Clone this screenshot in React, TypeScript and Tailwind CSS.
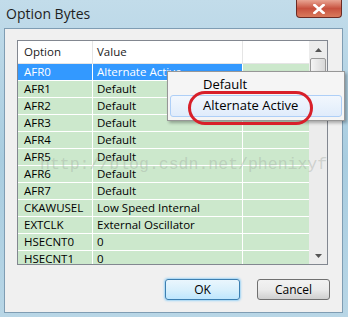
const rows: [string, string][] = [
  ["AFR0", "Alternate Active"],
  ["AFR1", "Default"],
  ["AFR2", "Default"],
  ["AFR3", "Default"],
  ["AFR4", "Default"],
  ["AFR5", "Default"],
  ["AFR6", "Default"],
  ["AFR7", "Default"],
  ["CKAWUSEL", "Low Speed Internal"],
  ["EXTCLK", "External Oscillator"],
  ["HSECNT0", "0"],
  ["HSECNT1", "0"],
];

const font = { fontFamily: '"Open Sans", "Noto Sans", sans-serif' };

function Scrollbar() {
  return (
    <div className="flex w-[18px] flex-col bg-[#ececec]">
      <div className="flex h-[17px] items-center justify-center">
        <svg width="7" height="4" viewBox="0 0 7 4">
          <path d="M0 4 L3.5 0 L7 4 Z" fill="#555" />
        </svg>
      </div>
      <div className="mx-[1px] h-[19px] rounded-[2px] border border-[#9a9a9a] bg-gradient-to-r from-[#f4f4f4] to-[#d8d8d8]" />
      <div className="flex-1" />
      <div className="flex h-[17px] items-center justify-center">
        <svg width="7" height="4" viewBox="0 0 7 4">
          <path d="M0 0 L3.5 4 L7 0 Z" fill="#555" />
        </svg>
      </div>
    </div>
  );
}

export default function App() {
  return (
    <div
      className="relative flex h-[317px] w-[348px] flex-col overflow-hidden bg-gradient-to-b from-[#c2dcea] via-[#a9cde0] to-[#b8d6e6] text-[#000]"
      style={font}
    >
      {/* title bar */}
      <div className="flex h-[28px] shrink-0 items-start">
        <span className="ml-[6px] mt-[5px] text-[14px] leading-[18px] text-[#1e1e1e]">Option Bytes</span>
        <div className="ml-auto mr-[6px] flex h-[18px] w-[46px] items-center justify-center rounded-b-[4px] border border-t-0 border-[#6b2b24] bg-gradient-to-b from-[#e8a493] via-[#c7513f] to-[#d97a5c]">
          <svg width="12" height="10" viewBox="0 0 12 10">
            <path d="M1.5 1 L10.5 9 M10.5 1 L1.5 9" stroke="#fff" strokeWidth="2.6" strokeLinecap="square" />
          </svg>
        </div>
      </div>

      {/* client area */}
      <div className="ml-[4px] flex h-[285px] w-[339px] flex-col border border-[#7f9db3] bg-[#f0f0f0]">
        {/* list */}
        <div className="ml-[12px] mt-[11px] flex h-[225px] w-[311px] overflow-hidden border border-[#828790] bg-white">
          <div className="flex flex-1 flex-col text-[11.5px]">
            <div className="flex h-[23px] shrink-0 items-center border-b border-[#e5e5e5] bg-white text-[#1a1a1a]">
              <div className="flex h-full w-[75px] items-center border-r border-[#e5e5e5] pl-[6px]">Option</div>
              <div className="flex h-full w-[150px] items-center border-r border-[#e5e5e5] pl-[4px]">Value</div>
              <div className="h-full flex-1" />
            </div>
            {rows.map(([opt, val], i) => {
              const sel = i === 0;
              return (
                <div key={opt} className="flex h-[17px] shrink-0 border-b border-white bg-[#cce8cc] leading-[16px]">
                  <div className={"w-[75px] border-r border-white pl-[6px] " + (sel ? "bg-[#3399ff] text-white" : "")}>
                    {opt}
                  </div>
                  <div className={"w-[150px] overflow-hidden whitespace-nowrap border-r border-white pl-[4px] " + (sel ? "bg-[#3399ff] text-white" : "")}>
                    {val}
                  </div>
                  <div className="flex-1" />
                </div>
              );
            })}
          </div>
          <Scrollbar />
        </div>

        {/* buttons */}
        <div className="mt-[14px] flex justify-end gap-[17px] pr-[12px] text-[12px]">
          <button className="h-[21px] w-[75px] rounded-[3px] border border-[#3c7fb1] bg-gradient-to-b from-[#eaf6fd] via-[#d9f0fc] to-[#bee6fd] shadow-[0_0_2px_1px_#9fd4f5]">
            OK
          </button>
          <button className="h-[21px] w-[73px] rounded-[3px] border border-[#707070] bg-gradient-to-b from-[#f2f2f2] via-[#ebebeb] to-[#cfcfcf]">
            Cancel
          </button>
        </div>
      </div>

      {/* watermark over the picture */}
      <div
        className="pointer-events-none absolute left-[40px] top-[155px] whitespace-nowrap text-[16.5px] leading-[20px] text-[#a0a8a0]/40"
        style={{ fontFamily: '"Liberation Mono", monospace' }}
      >
        http://blog.csdn.net/phenixyf
      </div>

      {/* context menu */}
      <div className="absolute left-[167px] top-[71px] flex h-[50px] w-[178px] flex-col border border-[#979797] bg-[#f5f5f5] py-[3px] pl-[2px] pr-[2px] text-[13px] shadow-[2px_2px_3px_rgba(0,0,0,0.3)]">
        <div className="flex h-[21px] items-center pl-[33px]">Default</div>
        <div className="flex h-[22px] items-center rounded-[3px] border border-[#aecff7] bg-gradient-to-b from-[#f2f7fd] to-[#e0ecfb] pl-[32px]">
          Alternate Active
        </div>
      </div>

      {/* red annotation ellipse */}
      <div className="pointer-events-none absolute left-[188px] top-[91px] h-[34px] w-[125px] rounded-[17px] border-[3.5px] border-[#d8202a]" />
    </div>
  );
}
